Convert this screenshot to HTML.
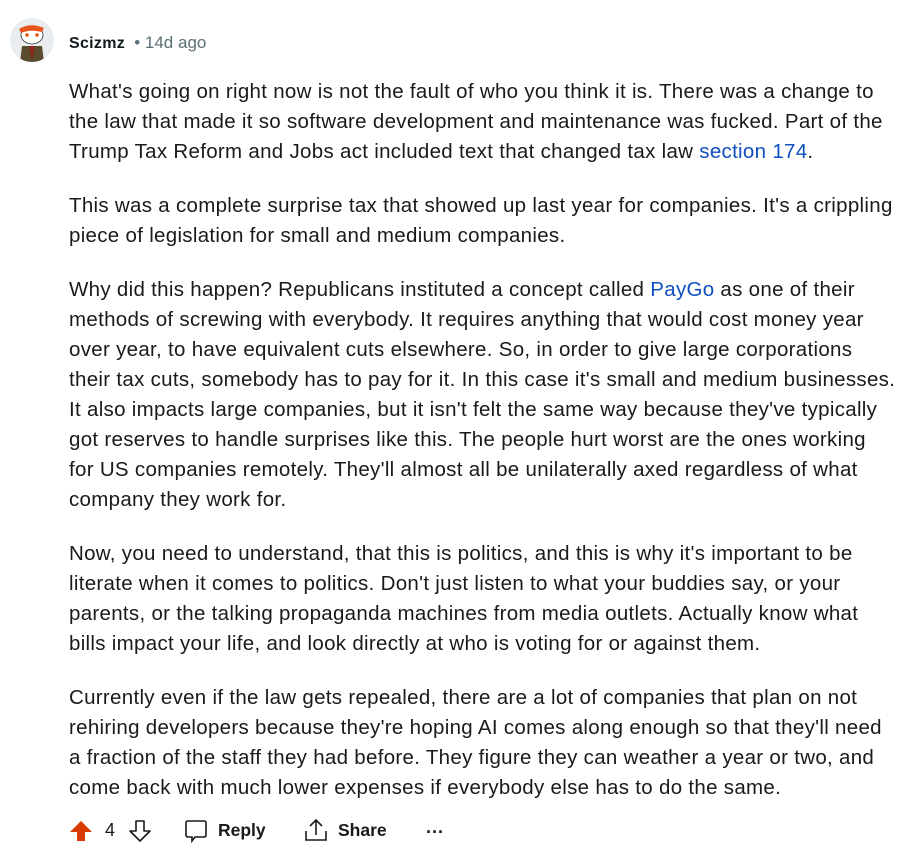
<!DOCTYPE html>
<html><head><meta charset="utf-8"><style>
body{margin:0;background:#fff;width:902px;height:858px;overflow:hidden;font-family:"Liberation Sans",sans-serif;color:#1a1a1b}
.hdr{position:absolute;left:69px;top:33px;font-size:16px;line-height:20px}
.hdr b{color:#0f1a1c;letter-spacing:0.3px}
.hdr span{color:#576f76;font-size:17px}
.av{position:absolute;left:10px;top:18px;width:44px;height:44px;border-radius:50%;background:#e9edf0;overflow:hidden}
.txt{position:absolute;left:69px;top:77px;font-size:20.5px;line-height:30px;color:#1a1a1b;white-space:nowrap;letter-spacing:0.3px}
.txt p{margin:0 0 24px 0}
a{color:#0f4fbf;text-decoration:none}
.bar{position:absolute;top:816px;left:0;width:902px;height:30px;font-size:18px;color:#1a1a1b}
.bar>*{position:absolute;top:0}
</style></head><body>
<div class="av">
<svg width="44" height="44" viewBox="0 0 44 44">
<rect width="44" height="44" fill="#e9edf0"/>
<ellipse cx="22" cy="17" rx="11" ry="9" fill="#fff" stroke="#333" stroke-width="0.8"/>
<path d="M9 11 Q20 4 34 10 L32 14 Q20 11 11 15Z" fill="#e8541c"/>
<circle cx="17" cy="17" r="1.8" fill="#e8541c"/><circle cx="27" cy="17" r="1.8" fill="#e8541c"/>
<path d="M12 28 L32 28 L34 44 L10 44Z" fill="#5a4a2e"/>
<path d="M19 28 L25 28 L23 40 L21 40Z" fill="#8b2a1a"/>
</svg></div>
<div class="hdr"><b>Scizmz</b> <span>&nbsp;•&nbsp;14d ago</span></div>
<div class="txt">
<p>What's going on right now is not the fault of who you think it is. There was a change to<br>the law that made it so software development and maintenance was fucked. Part of the<br>Trump Tax Reform and Jobs act included text that changed tax law <a>section 174</a>.</p>
<p>This was a complete surprise tax that showed up last year for companies. It's a crippling<br>piece of legislation for small and medium companies.</p>
<p>Why did this happen? Republicans instituted a concept called <a>PayGo</a> as one of their<br>methods of screwing with everybody. It requires anything that would cost money year<br>over year, to have equivalent cuts elsewhere. So, in order to give large corporations<br>their tax cuts, somebody has to pay for it. In this case it's small and medium businesses.<br>It also impacts large companies, but it isn't felt the same way because they've typically<br>got reserves to handle surprises like this. The people hurt worst are the ones working<br>for US companies remotely. They'll almost all be unilaterally axed regardless of what<br>company they work for.</p>
<p>Now, you need to understand, that this is politics, and this is why it's important to be<br>literate when it comes to politics. Don't just listen to what your buddies say, or your<br>parents, or the talking propaganda machines from media outlets. Actually know what<br>bills impact your life, and look directly at who is voting for or against them.</p>
<p>Currently even if the law gets repealed, there are a lot of companies that plan on not<br>rehiring developers because they're hoping AI comes along enough so that they'll need<br>a fraction of the staff they had before. They figure they can weather a year or two, and<br>come back with much lower expenses if everybody else has to do the same.</p>
</div>
<div class="bar">
<svg style="left:69px;top:3px" width="24" height="24" viewBox="0 0 24 24"><path d="M12 2 L23 13 L16 13 L16 22 L8 22 L8 13 L1 13Z" fill="#d93a00"/></svg>
<span style="left:105px;top:4px">4</span>
<svg style="left:128px;top:3px" width="24" height="24" viewBox="0 0 24 24"><path d="M12 22 L22 12 L16 12 L16 2 L8 2 L8 12 L2 12Z" fill="none" stroke="#1a1a1b" stroke-width="1.6" stroke-linejoin="round"/></svg>
<svg style="left:184px;top:3px" width="24" height="26" viewBox="0 0 24 26"><path d="M4 2 H20 Q22 2 22 4 V16 Q22 18 20 18 H11 L8 22 V18 H4 Q2 18 2 16 V4 Q2 2 4 2Z" fill="none" stroke="#1a1a1b" stroke-width="1.6"/></svg>
<b style="left:218px;top:4px;font-weight:600;font-size:17.5px">Reply</b>
<svg style="left:304px;top:2px" width="24" height="26" viewBox="0 0 24 26"><path d="M12 17 V2 M6 8 L12 2 L18 8 M2 13 V22 H22 V13" fill="none" stroke="#1a1a1b" stroke-width="1.6"/></svg>
<b style="left:338px;top:4px;font-weight:600;font-size:17.5px">Share</b>
<b style="left:426px;top:6px">···</b>
</div>
</body></html>
